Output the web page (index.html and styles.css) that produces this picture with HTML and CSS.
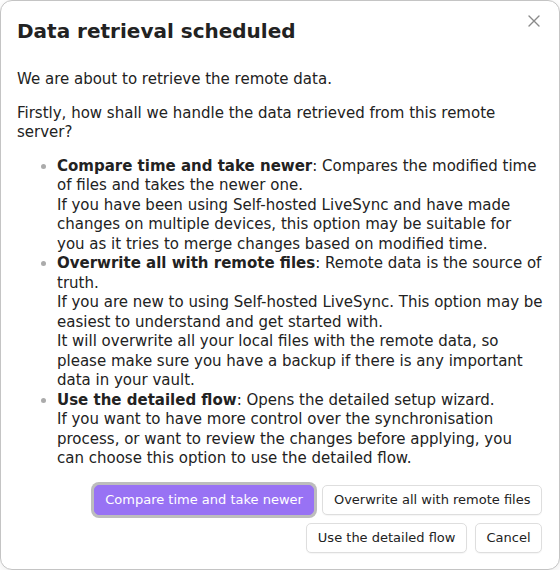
FILE: index.html
```html
<!DOCTYPE html>
<html lang="en">
<head>
<meta charset="utf-8">
<title>Data retrieval scheduled</title>
<link rel="stylesheet" href="styles.css">
</head>
<body>
<div class="modal">
  <button class="modal-close" aria-label="Close">
    <svg width="18" height="18" viewBox="0 0 18 18"><path d="M4 4 L14 14 M14 4 L4 14" stroke="#8a8a8a" stroke-width="1.4" stroke-linecap="round" fill="none"/></svg>
  </button>
  <div class="modal-title">Data retrieval scheduled</div>
  <div class="modal-content">
    <p>We are about to retrieve the remote data.</p>
    <p>Firstly, how shall we handle the data retrieved from this remote server?</p>
    <ul>
      <li><strong>Compare time and take newer</strong>: Compares the modified time of files and takes the newer one.<br>If you have been using Self-hosted LiveSync and have made changes on multiple devices, this option may be suitable for you as it tries to merge changes based on modified time.</li>
      <li><strong>Overwrite all with remote files</strong>: Remote data is the source of truth.<br>If you are new to using Self-hosted LiveSync. This option may be easiest to understand and get started with.<br>It will overwrite all your local files with the remote data, so please make sure you have a backup if there is any important data in your vault.</li>
      <li><strong>Use the detailed flow</strong>: Opens the detailed setup wizard.<br>If you want to have more control over the synchronisation process, or want to review the changes before applying, you can choose this option to use the detailed flow.</li>
    </ul>
  </div>
  <div class="button-row">
    <button class="btn btn-cta">Compare time and take newer</button>
    <button class="btn">Overwrite all with remote files</button>
    <button class="btn">Use the detailed flow</button>
    <button class="btn">Cancel</button>
  </div>
</div>
</body>
</html>
```

FILE: styles.css
```css
html, body {
  margin: 0;
  padding: 0;
  background: #ffffff;
}

body {
  font-family: "DejaVu Sans", "Liberation Sans", sans-serif;
  color: #222222;
}

.modal {
  position: relative;
  box-sizing: border-box;
  width: 560px;
  min-height: 570px;
  padding: 16px 17px 16px 16px;
  border: 1px solid #c4c4c4;
  border-radius: 12px;
  background: #ffffff;
  box-shadow: 0 2px 8px rgba(0, 0, 0, 0.08);
}

.modal-close {
  position: absolute;
  top: 11px;
  right: 16px;
  width: 18px;
  height: 18px;
  padding: 0;
  border: none;
  background: transparent;
  display: flex;
}

.modal-title {
  font-size: 20px;
  font-weight: 700;
  line-height: 28px;
  margin-bottom: 25px;
}

.modal-content {
  font-size: 15px;
  line-height: 19.5px;
  margin-right: -1px;
}

.modal-content p {
  margin: 0 0 14px 0;
}

.modal-content ul {
  margin: 0;
  padding-left: 40px;
}

.modal-content li::marker {
  color: #ababab;
}

.modal-content strong {
  font-weight: 700;
}

.button-row {
  display: flex;
  flex-wrap: wrap;
  justify-content: flex-end;
  gap: 8px;
  margin-top: 16px;
}

.btn {
  box-sizing: border-box;
  height: 30px;
  padding: 0 10.5px;
  font-family: "DejaVu Sans", "Liberation Sans", sans-serif;
  font-size: 13px;
  color: #222222;
  background: #ffffff;
  border: 1px solid #dedede;
  border-radius: 5px;
  box-shadow: 0 1px 1px rgba(0, 0, 0, 0.04);
}

.btn-cta {
  color: #ffffff;
  background: #9872f4;
  border-color: #9872f4;
  box-shadow: 0 0 0 3px #bdbdbd;
}
```
